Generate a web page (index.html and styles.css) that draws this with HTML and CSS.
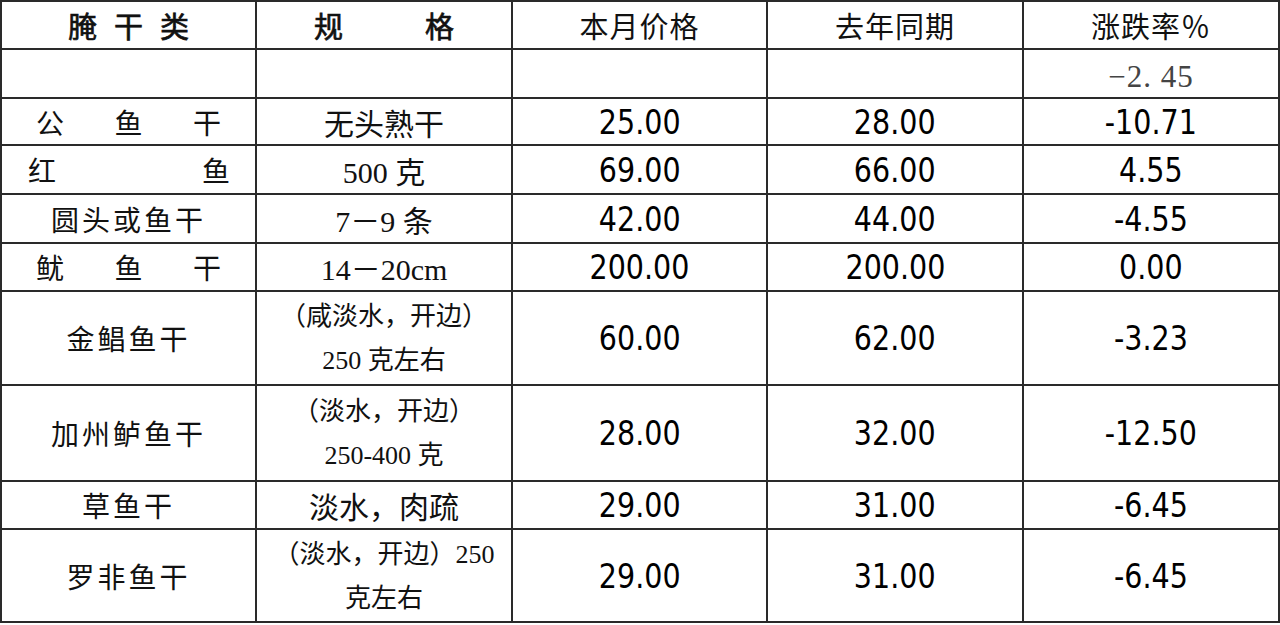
FILE: index.html
```html
<!DOCTYPE html>
<html lang="zh">
<head>
<meta charset="utf-8">
<title>腌干类价格</title>
<link rel="stylesheet" href="styles.css">
</head>
<body>
<div class="grid">
  <div class="c h song sp"><span>腌</span><span>干</span><span>类</span></div>
  <div class="c h song sp2"><span>规</span><span>格</span></div>
  <div class="c h hei">本月价格</div>
  <div class="c h hei">去年同期</div>
  <div class="c h hei">涨跌率％</div>

  <div class="c"></div>
  <div class="c"></div>
  <div class="c"></div>
  <div class="c"></div>
  <div class="c avg">−2. 45</div>

  <div class="c name spread"><span>公</span><span>鱼</span><span>干</span></div>
  <div class="c spec">无头熟干</div>
  <div class="c num"><span>25.00</span></div>
  <div class="c num"><span>28.00</span></div>
  <div class="c num"><span>-10.71</span></div>

  <div class="c name spread wide"><span>红</span><span>鱼</span></div>
  <div class="c spec">500 克</div>
  <div class="c num"><span>69.00</span></div>
  <div class="c num"><span>66.00</span></div>
  <div class="c num"><span>4.55</span></div>

  <div class="c name">圆头或鱼干</div>
  <div class="c spec">7－9 条</div>
  <div class="c num"><span>42.00</span></div>
  <div class="c num"><span>44.00</span></div>
  <div class="c num"><span>-4.55</span></div>

  <div class="c name spread"><span>鱿</span><span>鱼</span><span>干</span></div>
  <div class="c spec">14－20cm</div>
  <div class="c num"><span>200.00</span></div>
  <div class="c num"><span>200.00</span></div>
  <div class="c num"><span>0.00</span></div>

  <div class="c name">金鲳鱼干</div>
  <div class="c spec two"><span>（咸淡水，开边）</span><span>250 克左右</span></div>
  <div class="c num"><span>60.00</span></div>
  <div class="c num"><span>62.00</span></div>
  <div class="c num"><span>-3.23</span></div>

  <div class="c name">加州鲈鱼干</div>
  <div class="c spec two"><span>（淡水，开边）</span><span>250-400 克</span></div>
  <div class="c num"><span>28.00</span></div>
  <div class="c num"><span>32.00</span></div>
  <div class="c num"><span>-12.50</span></div>

  <div class="c name">草鱼干</div>
  <div class="c spec">淡水，肉疏</div>
  <div class="c num"><span>29.00</span></div>
  <div class="c num"><span>31.00</span></div>
  <div class="c num"><span>-6.45</span></div>

  <div class="c name">罗非鱼干</div>
  <div class="c spec two"><span>（淡水，开边）250</span><span>克左右</span></div>
  <div class="c num"><span>29.00</span></div>
  <div class="c num"><span>31.00</span></div>
  <div class="c num"><span>-6.45</span></div>
</div>
</body>
</html>
```
FILE: styles.css
```css
html, body {
  margin: 0;
  padding: 0;
  background: #fff;
}
body {
  width: 1280px;
  height: 625px;
  overflow: hidden;
}
.grid {
  display: grid;
  grid-template-columns: 253px 254px 253px 254px 254px;
  grid-template-rows: 46px 47px 45px 47px 47px 46px 92px 94px 46px 91px;
  gap: 2px;
  padding: 2px;
  background: #2a2a2a;
  width: 1276px;
}
.c {
  background: #fff;
  display: flex;
  align-items: center;
  justify-content: center;
  color: #111;
  font-family: "Noto Sans CJK SC", sans-serif;
  font-size: 28px;
  white-space: nowrap;
}
.h.song {
  font-weight: 400;
  font-size: 29px;
  -webkit-text-stroke: 0.7px #111;
}
.h.sp {
  gap: 16px;
}
.h.sp span {
  width: 30px;
  text-align: center;
}
.h.sp2 {
  gap: 82px;
}
.h.hei {
  font-size: 29px;
  letter-spacing: 1px;
}
.name {
  font-size: 28px;
  letter-spacing: 3px;
}
.name.spread {
  justify-content: space-between;
  padding: 0 34px 0 34px;
  letter-spacing: 0;
}
.name.spread.wide {
  padding: 0 25px 0 26px;
}
.spec {
  font-family: "Liberation Serif", "Noto Sans CJK SC", serif;
  font-size: 30px;
}
.spec.two {
  flex-direction: column;
  font-size: 26px;
  line-height: 44px;
  padding-top: 2px;
}
.num {
  font-family: "DejaVu Sans", sans-serif;
  font-size: 34px;
  color: #000;
}
.num span {
  display: inline-block;
  transform: scaleX(0.84);
}
.avg {
  font-family: "Liberation Serif", serif;
  font-size: 31px;
  color: #444;
  letter-spacing: 1px;
  padding-top: 7px;
}
```
